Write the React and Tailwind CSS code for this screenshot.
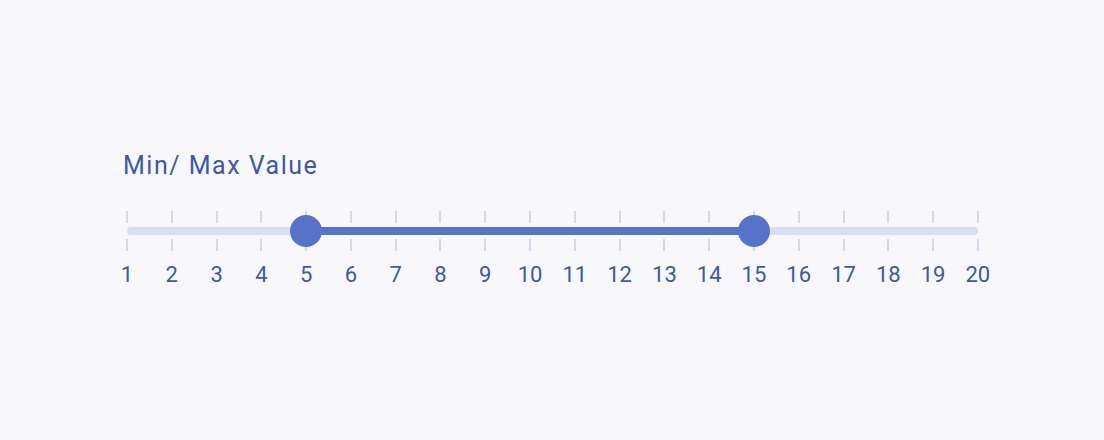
import React from "react";

const MIN = 1;
const MAX = 20;
const low = 5;
const high = 15;
const values = Array.from({ length: MAX - MIN + 1 }, (_, i) => MIN + i);

// centre of a value's tick inside the 853px row, whose ticks are 2px wide
const pos = (v) => 1 + ((v - MIN) / (MAX - MIN)) * 851;

function TickRow() {
  return (
    <div className="flex justify-between h-[12px]">
      {values.map((v) => (
        <div key={v} className="w-[2px] h-full bg-[#d3d8ea]" />
      ))}
    </div>
  );
}

export default function App() {
  return (
    <div
      className="w-full h-[440px] bg-[#f8f8fb] pt-[152px] pl-[126px]"
      style={{ fontFamily: "Roboto, 'Liberation Sans', sans-serif" }}
    >
      <div className="-ml-[3px] text-[25px] leading-[28px] tracking-[1.5px] text-[#3c58a8]">Min/ Max Value</div>

      <div className="relative w-[853px] mt-[31px]">
        <TickRow />
        <div className="my-[4px] mx-[1px] h-[8px] rounded-full bg-[#dadfee]" />
        <TickRow />

        {/* selected range between the two handles */}
        <div
          className="absolute top-[16px] h-[8px] bg-[#5673c9]"
          style={{ left: pos(low), width: pos(high) - pos(low) }}
        />
        {[low, high].map((v) => (
          <div
            key={v}
            className="absolute top-[4px] w-[32px] h-[32px] -ml-[16px] rounded-full bg-[#5673c9]"
            style={{ left: pos(v) }}
          />
        ))}
      </div>

      <div className="flex justify-between w-[853px] mt-[11px]">
        {values.map((v) => (
          <div key={v} className="w-[2px] flex justify-center">
            <span className="whitespace-nowrap text-[22px] leading-[26px] text-[#3c58a8]">{v}</span>
          </div>
        ))}
      </div>
    </div>
  );
}
